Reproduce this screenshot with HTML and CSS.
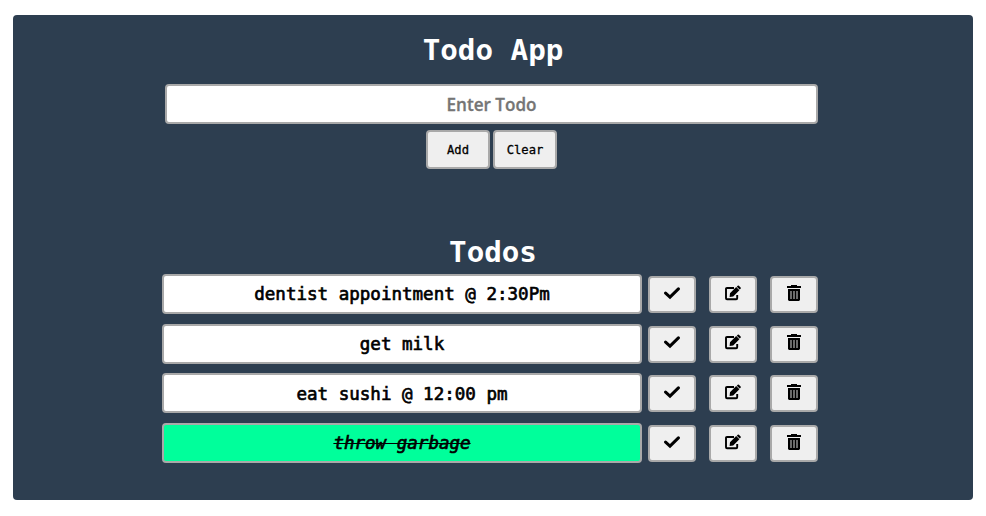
FILE: index.html
```
<!DOCTYPE html>
<html lang="en">
<head>
<meta charset="utf-8">
<title>Todo App</title>
<link rel="stylesheet" href="styles.css">
</head>
<body>
<svg class="sprite" aria-hidden="true">
  <symbol id="check" viewBox="0 0 16 16"><path d="M1.6 8.100 6 12.100 14.400 3.900" fill="none" stroke="#000" stroke-width="3" stroke-linecap="round"/></symbol>
  <symbol id="edit" viewBox="0 0 16 16"><path d="M9 3H2Q1 3 1 4V13.200Q1 14.200 2 14.200H11.200Q12.200 14.200 12.200 13.200V10" fill="none" stroke="#000" stroke-width="1.9"/><path d="m4.600 11.900.4-3.600 6.200-6.200 3.200 3.200-6.200 6.200zM11.800 1.700l.9-.9q.6-.5 1.200 0l1.700 1.700q.5.600 0 1.200l-.9.9z"/></symbol>
  <symbol id="trash" viewBox="0 0 16 16"><path d="M1 1h4V0h6v1h4v2H1zM2 4h12v11l-1 1H3l-1-1z"/><path d="M4 6h2v8H4zM7 6h2v8H7zM10 6h2v8h-2z" fill="#6b6b6b"/></symbol>
</svg>
<main class="card">
  <h1 class="title">Todo App</h1>
  <input class="entry" type="text" placeholder="Enter Todo">
  <div class="actions"><button class="btn">Add</button><button class="btn">Clear</button></div>
  <h2 class="title list-title">Todos</h2>
  <ul class="list">
    <li class="row"><div class="item">dentist appointment @ 2:30Pm</div><button class="tool"><svg><use href="#check"/></svg></button><button class="tool"><svg><use href="#edit"/></svg></button><button class="tool"><svg><use href="#trash"/></svg></button></li>
    <li class="row"><div class="item">get milk</div><button class="tool"><svg><use href="#check"/></svg></button><button class="tool"><svg><use href="#edit"/></svg></button><button class="tool"><svg><use href="#trash"/></svg></button></li>
    <li class="row"><div class="item">eat sushi @ 12:00 pm</div><button class="tool"><svg><use href="#check"/></svg></button><button class="tool"><svg><use href="#edit"/></svg></button><button class="tool"><svg><use href="#trash"/></svg></button></li>
    <li class="row"><div class="item done">throw garbage</div><button class="tool"><svg><use href="#check"/></svg></button><button class="tool"><svg><use href="#edit"/></svg></button><button class="tool"><svg><use href="#trash"/></svg></button></li>
  </ul>
</main>
</body>
</html>
```
FILE: styles.css
```
* { box-sizing: border-box; }
body { margin: 0; padding: 15px 13px 0; background: #fff; font-family: "DejaVu Sans Mono", monospace; }
.sprite { display: none; }
.card { height: 485px; background: #2d3e50; border-radius: 4px; overflow: hidden; }
.title { margin: 15px 0 0; height: 40px; line-height: 40px; color: #fff; font-size: 29.2px; font-weight: 700; text-align: center; }
.entry { display: block; width: 653px; height: 40px; margin: 14px 0 0 152px; padding: 1px 0 0; border: 2px solid #a9a9a9; border-radius: 4px; background: #fff; font: 600 17.1px "Open Sans", sans-serif; text-align: center; }
.entry::placeholder { color: #757575; opacity: 1; -webkit-text-stroke: 0.3px #757575; }
.actions { display: flex; gap: 3px; margin: 6px 0 0 413px; }
.btn { width: 64px; height: 39px; padding: 0; border: 2px solid #a9a9a9; border-radius: 4px; background: #efefef; color: #000; font: 400 12.17px "DejaVu Sans Mono", monospace; -webkit-text-stroke: 0.3px #000; }
.list-title { margin-top: 62px; line-height: 42px; }
.list { list-style: none; margin: 3px 0 0 149px; padding: 0; }
.row { display: flex; align-items: center; height: 40px; margin-bottom: 9.65px; }
.item { width: 480px; height: 40px; margin-right: 6px; padding-top: 1.4px; border: 2px solid #a9a9a9; border-radius: 4px; background: #fff; color: #000; font-size: 17.54px; font-weight: 400; line-height: 35px; text-align: center; -webkit-text-stroke: 0.65px #000; }
.done { background: #00ff9b; font-style: italic; text-decoration: line-through; text-decoration-thickness: 1px; }
.tool { display: flex; justify-content: center; width: 48px; height: 37px; margin: 1px 13px 0 0; padding: 6.6px 0 0; border: 2px solid #a9a9a9; border-radius: 4px; background: #efefef; }
.tool svg { width: 16px; height: 16px; }
```
